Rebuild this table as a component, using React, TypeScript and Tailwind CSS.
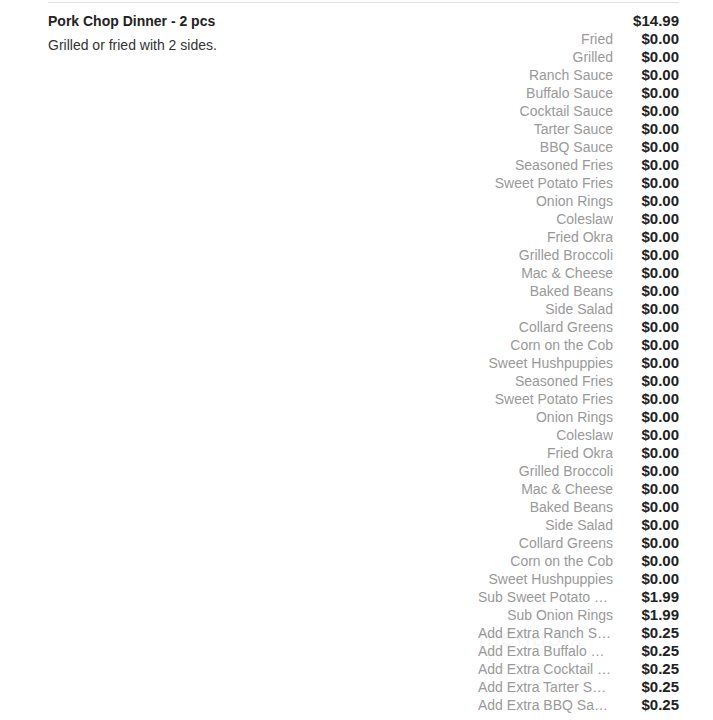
const OPTIONS: { name: string; price: string }[] = [
  { name: 'Fried', price: '$0.00' },
  { name: 'Grilled', price: '$0.00' },
  { name: 'Ranch Sauce', price: '$0.00' },
  { name: 'Buffalo Sauce', price: '$0.00' },
  { name: 'Cocktail Sauce', price: '$0.00' },
  { name: 'Tarter Sauce', price: '$0.00' },
  { name: 'BBQ Sauce', price: '$0.00' },
  { name: 'Seasoned Fries', price: '$0.00' },
  { name: 'Sweet Potato Fries', price: '$0.00' },
  { name: 'Onion Rings', price: '$0.00' },
  { name: 'Coleslaw', price: '$0.00' },
  { name: 'Fried Okra', price: '$0.00' },
  { name: 'Grilled Broccoli', price: '$0.00' },
  { name: 'Mac & Cheese', price: '$0.00' },
  { name: 'Baked Beans', price: '$0.00' },
  { name: 'Side Salad', price: '$0.00' },
  { name: 'Collard Greens', price: '$0.00' },
  { name: 'Corn on the Cob', price: '$0.00' },
  { name: 'Sweet Hushpuppies', price: '$0.00' },
  { name: 'Seasoned Fries', price: '$0.00' },
  { name: 'Sweet Potato Fries', price: '$0.00' },
  { name: 'Onion Rings', price: '$0.00' },
  { name: 'Coleslaw', price: '$0.00' },
  { name: 'Fried Okra', price: '$0.00' },
  { name: 'Grilled Broccoli', price: '$0.00' },
  { name: 'Mac & Cheese', price: '$0.00' },
  { name: 'Baked Beans', price: '$0.00' },
  { name: 'Side Salad', price: '$0.00' },
  { name: 'Collard Greens', price: '$0.00' },
  { name: 'Corn on the Cob', price: '$0.00' },
  { name: 'Sweet Hushpuppies', price: '$0.00' },
  { name: 'Sub Sweet Potato Fries', price: '$1.99' },
  { name: 'Sub Onion Rings', price: '$1.99' },
  { name: 'Add Extra Ranch Sauce', price: '$0.25' },
  { name: 'Add Extra Buffalo Sauce', price: '$0.25' },
  { name: 'Add Extra Cocktail Sauce', price: '$0.25' },
  { name: 'Add Extra Tarter Sauce', price: '$0.25' },
  { name: 'Add Extra BBQ Sauce', price: '$0.25' },
];

function OptionRow({ name, price }: { name: string; price: string }) {
  return (
    <div className="flex h-[18px] items-center">
      <span className="w-[135px] truncate text-right text-[14px] leading-[18px] text-[#999]">{name}</span>
      <span className="w-[66px] text-right text-[15px] font-bold leading-[18px] text-[#222]">{price}</span>
    </div>
  );
}

export default function App() {
  return (
    <div
      className="relative h-[720px] w-[713px] overflow-hidden bg-white"
      style={{ fontFamily: "'Liberation Sans', Arial, sans-serif" }}
    >
      <div className="ml-[48px] mt-[2px] w-[631px] border-t border-[#e3e3e3] pt-[9px]">
        <div className="flex justify-between">
          <div>
            <div className="text-[14px] font-bold leading-[18px] text-[#222]">Pork Chop Dinner - 2 pcs</div>
            <div className="mt-[6px] text-[14px] leading-[18px] text-[#333]">Grilled or fried with 2 sides.</div>
          </div>
          <div className="flex flex-col">
            <div className="h-[18px] text-right text-[15px] font-bold leading-[18px] text-[#222]">$14.99</div>
            {OPTIONS.map((o, i) => (
              <OptionRow key={i} name={o.name} price={o.price} />
            ))}
          </div>
        </div>
      </div>
      <div className="pointer-events-none absolute left-[478px] top-[624px] text-[26px] leading-[26px] tracking-[1px] text-[#000]/[0.05]">
        menupix
      </div>
    </div>
  );
}
